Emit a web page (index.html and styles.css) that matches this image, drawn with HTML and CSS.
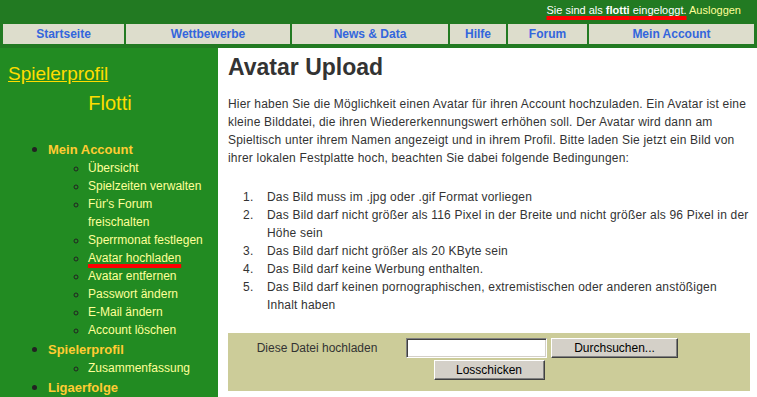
FILE: index.html
```html
<!DOCTYPE html>
<html lang="de">
<head>
    <meta charset="UTF-8">
    <title>Avatar Upload</title>
    <link rel="stylesheet" href="styles.css">
</head>
<body>
    <div class="topbar">
        <span class="marked">Sie sind als <b>flotti</b> eingeloggt.</span>
        <a href="#" class="logout">Ausloggen</a>
    </div>
    <div class="nav">
        <a href="#" class="nav-item">Startseite</a>
        <a href="#" class="nav-item">Wettbewerbe</a>
        <a href="#" class="nav-item">News &amp; Data</a>
        <a href="#" class="nav-item">Hilfe</a>
        <a href="#" class="nav-item">Forum</a>
        <a href="#" class="nav-item">Mein Account</a>
    </div>
    <div class="page">
        <div class="sidebar">
            <a href="#" class="profile-link">Spielerprofil</a>
            <div class="player-name">Flotti</div>
            <ul class="menu">
                <li>
                    <a href="#" class="menu-head">Mein Account</a>
                    <ul class="submenu">
                        <li><a href="#">Übersicht</a></li>
                        <li><a href="#">Spielzeiten verwalten</a></li>
                        <li><a href="#">Für's Forum freischalten</a></li>
                        <li><a href="#">Sperrmonat festlegen</a></li>
                        <li><a href="#" class="marked">Avatar hochladen</a></li>
                        <li><a href="#">Avatar entfernen</a></li>
                        <li><a href="#">Passwort ändern</a></li>
                        <li><a href="#">E-Mail ändern</a></li>
                        <li><a href="#">Account löschen</a></li>
                    </ul>
                </li>
                <li>
                    <a href="#" class="menu-head">Spielerprofil</a>
                    <ul class="submenu">
                        <li><a href="#">Zusammenfassung</a></li>
                    </ul>
                </li>
                <li>
                    <a href="#" class="menu-head">Ligaerfolge</a>
                </li>
            </ul>
        </div>
        <div class="content">
            <h1>Avatar Upload</h1>
            <p>Hier haben Sie die Möglichkeit einen Avatar für ihren Account hochzuladen. Ein Avatar ist eine kleine Bilddatei, die ihren Wiedererkennungswert erhöhen soll. Der Avatar wird dann am Spieltisch unter ihrem Namen angezeigt und in ihrem Profil. Bitte laden Sie jetzt ein Bild von ihrer lokalen Festplatte hoch, beachten Sie dabei folgende Bedingungen:</p>
            <ol class="rules">
                <li>Das Bild muss im .jpg oder .gif Format vorliegen</li>
                <li>Das Bild darf nicht größer als 116 Pixel in der Breite und nicht größer als 96 Pixel in der Höhe sein</li>
                <li>Das Bild darf nicht größer als 20 KByte sein</li>
                <li>Das Bild darf keine Werbung enthalten.</li>
                <li>Das Bild darf keinen pornographischen, extremistischen oder anderen anstößigen Inhalt haben</li>
            </ol>
            <form class="upload-box" action="#" method="post">
                <label class="upload-label" for="avatar-file">Diese Datei hochladen</label>
                <div class="upload-field">
                    <input type="text" id="avatar-file" class="file-input">
                    <button type="button" class="win-btn browse-btn">Durchsuchen...</button>
                </div>
                <div class="upload-submit">
                    <button type="submit" class="win-btn send-btn">Losschicken</button>
                </div>
            </form>
        </div>
    </div>
</body>
</html>
```

FILE: styles.css
```css
body, html {
    margin: 0;
    padding: 0;
    height: 100%;
    overflow: hidden;
    font-family: "Liberation Sans", Arial, sans-serif;
}

body {
    background-color: #227a22;
    display: flex;
    flex-direction: column;
}

a {
    text-decoration: none;
}

.marked {
    text-decoration: underline 4px #ff0000;
    text-underline-offset: 2px;
    text-decoration-skip-ink: none;
}

/* Login line */
.topbar {
    height: 24px;
    line-height: 20px;
    padding-right: 16px;
    text-align: right;
    font-size: 11px;
    color: #fff;
}

.logout {
    color: #ffff99;
}

/* Main navigation */
.nav {
    display: grid;
    grid-template-columns: 121px 164px 156px 56px 79px 1fr;
    gap: 2px;
    padding: 0 3px;
    margin-bottom: 4px;
}

.nav-item {
    height: 20px;
    line-height: 20px;
    background-color: #ddddcc;
    color: #3366dd;
    font-size: 12px;
    font-weight: bold;
    text-align: center;
}

.page {
    flex: 1;
    display: flex;
    min-height: 0;
}

/* Sidebar */
.sidebar {
    width: 218px;
    flex-shrink: 0;
    box-sizing: border-box;
    padding: 15px 6px 0 8px;
    background-color: #228b22;
}

.profile-link {
    display: inline-block;
    line-height: 22px;
    font-size: 19px;
    color: #ffdd00;
    text-decoration: underline;
}

.player-name {
    margin-top: 6px;
    line-height: 24px;
    font-size: 20px;
    color: #ffdd00;
    text-align: center;
}

.menu {
    margin: 24px 0 0;
    padding-left: 40px;
    color: #222;
    list-style: disc;
}

.menu > li {
    line-height: 19px;
}

.menu-head {
    font-size: 13px;
    font-weight: bold;
    color: #ffcc33;
}

.submenu {
    margin: 0;
    padding-left: 40px;
    list-style: circle;
}

.submenu li {
    line-height: 18px;
    font-size: 12px;
}

.submenu a {
    color: #ffff99;
}

/* Content */
.content {
    flex: 1;
    padding: 5px 7px 0 10px;
    background-color: #fff;
    color: #333;
    font-size: 12px;
}

.content h1 {
    margin: 0;
    line-height: 28px;
    font-size: 23px;
    font-weight: bold;
}

.content p {
    margin: 14px 0 21px;
    line-height: 18px;
    letter-spacing: 0.2px;
}

.rules {
    margin: 0 0 19px;
    padding-left: 39px;
    list-style: none;
    letter-spacing: 0.2px;
    counter-reset: rule;
}

.rules li {
    line-height: 18px;
    counter-increment: rule;
}

.rules li::before {
    content: counter(rule) ".";
    display: inline-block;
    width: 24px;
    margin-left: -24px;
}

/* Upload form */
.upload-box {
    display: grid;
    grid-template-columns: 178px 1fr;
    row-gap: 2px;
    margin: 0;
    padding: 5px 0 11px;
    background-color: #cccc99;
}

.upload-label {
    text-align: center;
    line-height: 20px;
}

.upload-field {
    display: flex;
    gap: 4px;
}

.upload-submit {
    grid-column: 1 / 3;
    text-align: center;
}

.file-input {
    width: 141px;
    height: 20px;
    box-sizing: border-box;
    margin: 0;
    padding: 0 3px;
    border: 1px solid;
    border-color: #808080 #ffffff #ffffff #808080;
    box-shadow: inset 1px 1px 0 #404040, inset -1px -1px 0 #d4d0c8;
    background-color: #fff;
    font-family: inherit;
    font-size: 12px;
}

.win-btn {
    height: 20px;
    box-sizing: border-box;
    margin: 0;
    padding: 0;
    border: 1px solid;
    border-color: #ffffff #404040 #404040 #ffffff;
    box-shadow: inset -1px -1px 0 #808080;
    background-color: #d4d0c8;
    color: #000;
    font-family: inherit;
    font-size: 12px;
}

.browse-btn {
    width: 127px;
}

.send-btn {
    width: 111px;
}
```
